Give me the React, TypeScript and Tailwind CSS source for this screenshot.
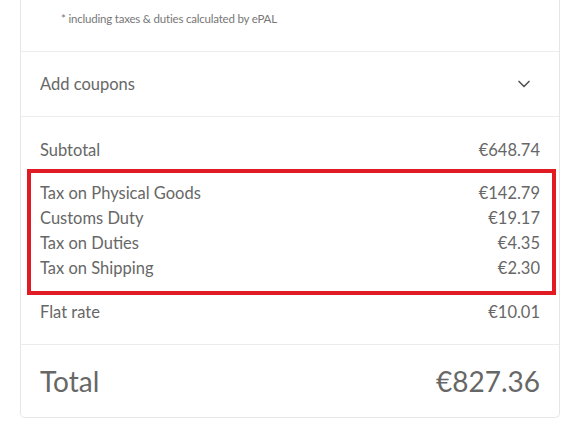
import { ChevronDown } from 'lucide-react'

const taxes = [
  { label: 'Tax on Physical Goods', amount: '€142.79' },
  { label: 'Customs Duty', amount: '€19.17' },
  { label: 'Tax on Duties', amount: '€4.35' },
  { label: 'Tax on Shipping', amount: '€2.30' },
]

function Row({ label, amount }: { label: string; amount: string }) {
  return (
    <div className="flex items-center justify-between h-[25px]">
      <span>{label}</span>
      <span>{amount}</span>
    </div>
  )
}

export default function App() {
  return (
    <div className="w-[575px] h-[432px] bg-white overflow-hidden font-['Lato',sans-serif] text-[#676767]">
      <div className="ml-[20px] w-[540px] border border-t-0 border-[#e6e6e6] rounded-b-[5px]">
        {/* ePAL note */}
        <div className="h-[51px] pl-[40px] flex items-center text-[11.5px] tracking-[-0.2px] text-[#777] pb-[14px]">
          * including taxes &amp; duties calculated by ePAL
        </div>

        {/* Coupons */}
        <div className="h-[65px] border-t border-[#ececec] px-[19px] flex items-center justify-between text-[16.5px]">
          <span>Add coupons</span>
          <ChevronDown className="w-[20px] h-[20px] text-[#555] mr-[6px]" strokeWidth={2} />
        </div>

        {/* Breakdown */}
        <div className="border-t border-[#ececec] px-[19px] pt-[21px] pb-[19px] text-[16.5px]">
          <Row label="Subtotal" amount="€648.74" />
          <div className="mt-[6px] ml-[-13px] mr-[-16px] border-[4px] border-[#e01b24] pl-[9px] pr-[12px] pt-[8px] pb-[10px]">
            {taxes.map((t) => (
              <Row key={t.label} label={t.label} amount={t.amount} />
            ))}
          </div>
          <div className="mt-[5px]">
            <Row label="Flat rate" amount="€10.01" />
          </div>
        </div>

        {/* Total */}
        <div className="h-[73px] border-t border-[#ececec] px-[19px] flex items-center justify-between text-[28px]">
          <span>Total</span>
          <span>€827.36</span>
        </div>
      </div>
    </div>
  )
}
